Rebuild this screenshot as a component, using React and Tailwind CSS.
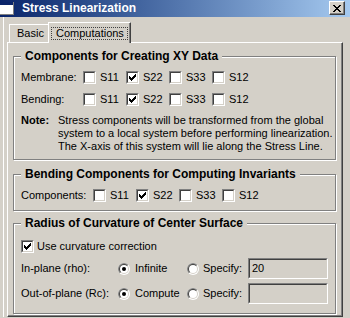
import React from 'react';

function Check({ checked }) {
  return (
    <span className="block w-[13px] h-[13px] shrink-0 border border-t-[#808080] border-l-[#808080] border-b-white border-r-white">
      <span className="block w-full h-full border border-t-[#404040] border-l-[#404040] border-b-[#d4d0c8] border-r-[#d4d0c8] bg-white">
        {checked && (
          <svg width="9" height="9" viewBox="0 0 9 9" className="block" shapeRendering="crispEdges">
            <path d="M1 3h1v1h1v1h1v-1h1v-1h1v-1h1v-1h1v3h-1v1h-1v1h-1v1h-1v1h-1v-1h-1v-1h-1z" fill="#000" />
          </svg>
        )}
      </span>
    </span>
  );
}

function Radio({ on }) {
  return (
    <svg width="12" height="12" viewBox="0 0 12 12" className="block shrink-0">
      <defs>
        <clipPath id="tl">
          <polygon points="0,0 12,0 0,12" />
        </clipPath>
      </defs>
      <circle cx="6" cy="6" r="6" fill="#fff" />
      <circle cx="6" cy="6" r="6" fill="#808080" clipPath="url(#tl)" />
      <circle cx="6" cy="6" r="5" fill="#d4d0c8" />
      <circle cx="6" cy="6" r="5" fill="#404040" clipPath="url(#tl)" />
      <circle cx="6" cy="6" r="4" fill="#fff" />
      {on && <circle cx="6" cy="6" r="2" fill="#000" />}
    </svg>
  );
}

function Item({ label, checked }) {
  return (
    <div className="flex items-center gap-[4px] w-[43px]">
      <Check checked={checked} />
      <span className="leading-[13px]">{label}</span>
    </div>
  );
}

function Group({ title, className, children }) {
  return (
    <div className={`relative w-[323px] border border-[#808080] shadow-[1px_1px_0_#fff,inset_1px_1px_0_#fff] ${className}`}>
      <span className="absolute left-[7px] -top-[8px] px-[4px] bg-[#d4d0c8] font-bold text-[12px] leading-[14px]">{title}</span>
      {children}
    </div>
  );
}

function Field({ value }) {
  return (
    <div className="w-[80px] h-[21px] border border-t-[#808080] border-l-[#808080] border-b-white border-r-white">
      <div className="h-full border border-t-[#404040] border-l-[#404040] border-b-[#d4d0c8] border-r-[#d4d0c8] bg-[#d4d0c8] pl-[2px] leading-[17px]">{value}</div>
    </div>
  );
}

export default function App() {
  return (
    <div className="w-[350px] h-[318px] bg-[#d4d0c8] overflow-hidden font-['Liberation_Sans',Arial,sans-serif] text-[11px] text-black select-none">
      {/* title bar */}
      <div className="flex items-start h-[17px] bg-linear-to-r from-[#0a246a] to-[#a6caf0]">
        <svg width="14" height="13" viewBox="0 0 14 13" className="mt-[2px] shrink-0" shapeRendering="crispEdges">
          <rect x="0" y="0" width="14" height="13" fill="#fff" />
          <rect x="0" y="0" width="14" height="3" fill="#0a246a" />
          <rect x="0" y="12" width="14" height="1" fill="#808080" />
          <rect x="13" y="0" width="1" height="13" fill="#808080" />
        </svg>
        <span className="ml-[8px] text-white font-bold text-[12px] leading-[16px]">Stress Linearization</span>
        <div className="ml-auto mr-[5px] mt-[1px] w-[16px] h-[14px] bg-[#d4d0c8] border border-t-white border-l-white border-b-[#404040] border-r-[#404040] shadow-[inset_-1px_-1px_0_#808080] flex items-center justify-center">
          <svg width="8" height="7" viewBox="0 0 8 7" shapeRendering="crispEdges">
            <path d="M0 0h2v1h1v1h2v-1h1v-1h2v1h-1v1h-1v1h-1v1h1v1h1v1h1v1h-2v-1h-1v-1h-2v1h-1v1h-2v-1h1v-1h1v-1h1v-1h-1v-1h-1v-1h-1z" fill="#000" />
          </svg>
        </div>
      </div>

      <div className="ml-[3px] border-l border-white pt-[5px] pl-[3px] pr-[7px]">
        {/* tabs */}
        <div className="flex items-end h-[20px] pl-[2px]">
          <div className="w-[39px] h-[18px] border-t border-l border-white flex items-center pl-[7px]">Basic</div>
          <div className="relative z-10 w-[83px] h-[21px] -mb-[1px] bg-[#d4d0c8] border-t border-l border-white border-r border-r-[#404040] shadow-[inset_-1px_0_0_#808080] pt-[4px] pl-[2px]">
            <div className="w-[77px] h-[13px] border border-dotted border-[#404040] pl-[4px] leading-[11px]">Computations</div>
          </div>
        </div>

        {/* panel */}
        <div className="h-[275px] border border-white border-r-[#404040] border-b-[#404040] shadow-[inset_-1px_-1px_0_#808080] pt-[13px] pl-[5px]">
          <Group title="Components for Creating XY Data" className="pt-[14px] pb-[6px] pl-[7px]">
            <div className="flex items-center h-[13px]">
              <span className="w-[62px]">Membrane:</span>
              <Item label="S11" />
              <Item label="S22" checked />
              <Item label="S33" />
              <Item label="S12" />
            </div>
            <div className="flex items-center h-[13px] mt-[9px]">
              <span className="w-[62px]">Bending:</span>
              <Item label="S11" />
              <Item label="S22" checked />
              <Item label="S33" />
              <Item label="S12" />
            </div>
            <div className="flex mt-[8px] leading-[13px]">
              <span className="w-[37px] font-bold">Note:</span>
              <div>
                <div>Stress components will be transformed from the global</div>
                <div>system to a local system before performing linearization.</div>
                <div>The X-axis of this system will lie along the Stress Line.</div>
              </div>
            </div>
          </Group>

          <Group title="Bending Components for Computing Invariants" className="mt-[14px] pt-[14px] pb-[8px] pl-[7px]">
            <div className="flex items-center h-[13px]">
              <span className="w-[72px]">Components:</span>
              <Item label="S11" />
              <Item label="S22" checked />
              <Item label="S33" />
              <Item label="S12" />
            </div>
          </Group>

          <Group title="Radius of Curvature of Center Surface" className="mt-[12px] pt-[16px] pb-[9px] pl-[7px]">
            <div className="flex items-center gap-[3px] h-[13px]">
              <Check checked />
              <span>Use curvature correction</span>
            </div>
            <div className="flex items-center h-[21px] mt-[5px]">
              <span className="w-[97px]">In-plane (rho):</span>
              <div className="flex items-center gap-[5px] w-[69px]">
                <Radio on />
                <span>Infinite</span>
              </div>
              <div className="flex items-center gap-[4px] w-[61px]">
                <Radio />
                <span>Specify:</span>
              </div>
              <Field value="20" />
            </div>
            <div className="flex items-center h-[21px] mt-[4px]">
              <span className="w-[97px]">Out-of-plane (Rc):</span>
              <div className="flex items-center gap-[5px] w-[69px]">
                <Radio on />
                <span>Compute</span>
              </div>
              <div className="flex items-center gap-[4px] w-[61px]">
                <Radio />
                <span>Specify:</span>
              </div>
              <Field value="" />
            </div>
          </Group>
        </div>
      </div>
    </div>
  );
}
